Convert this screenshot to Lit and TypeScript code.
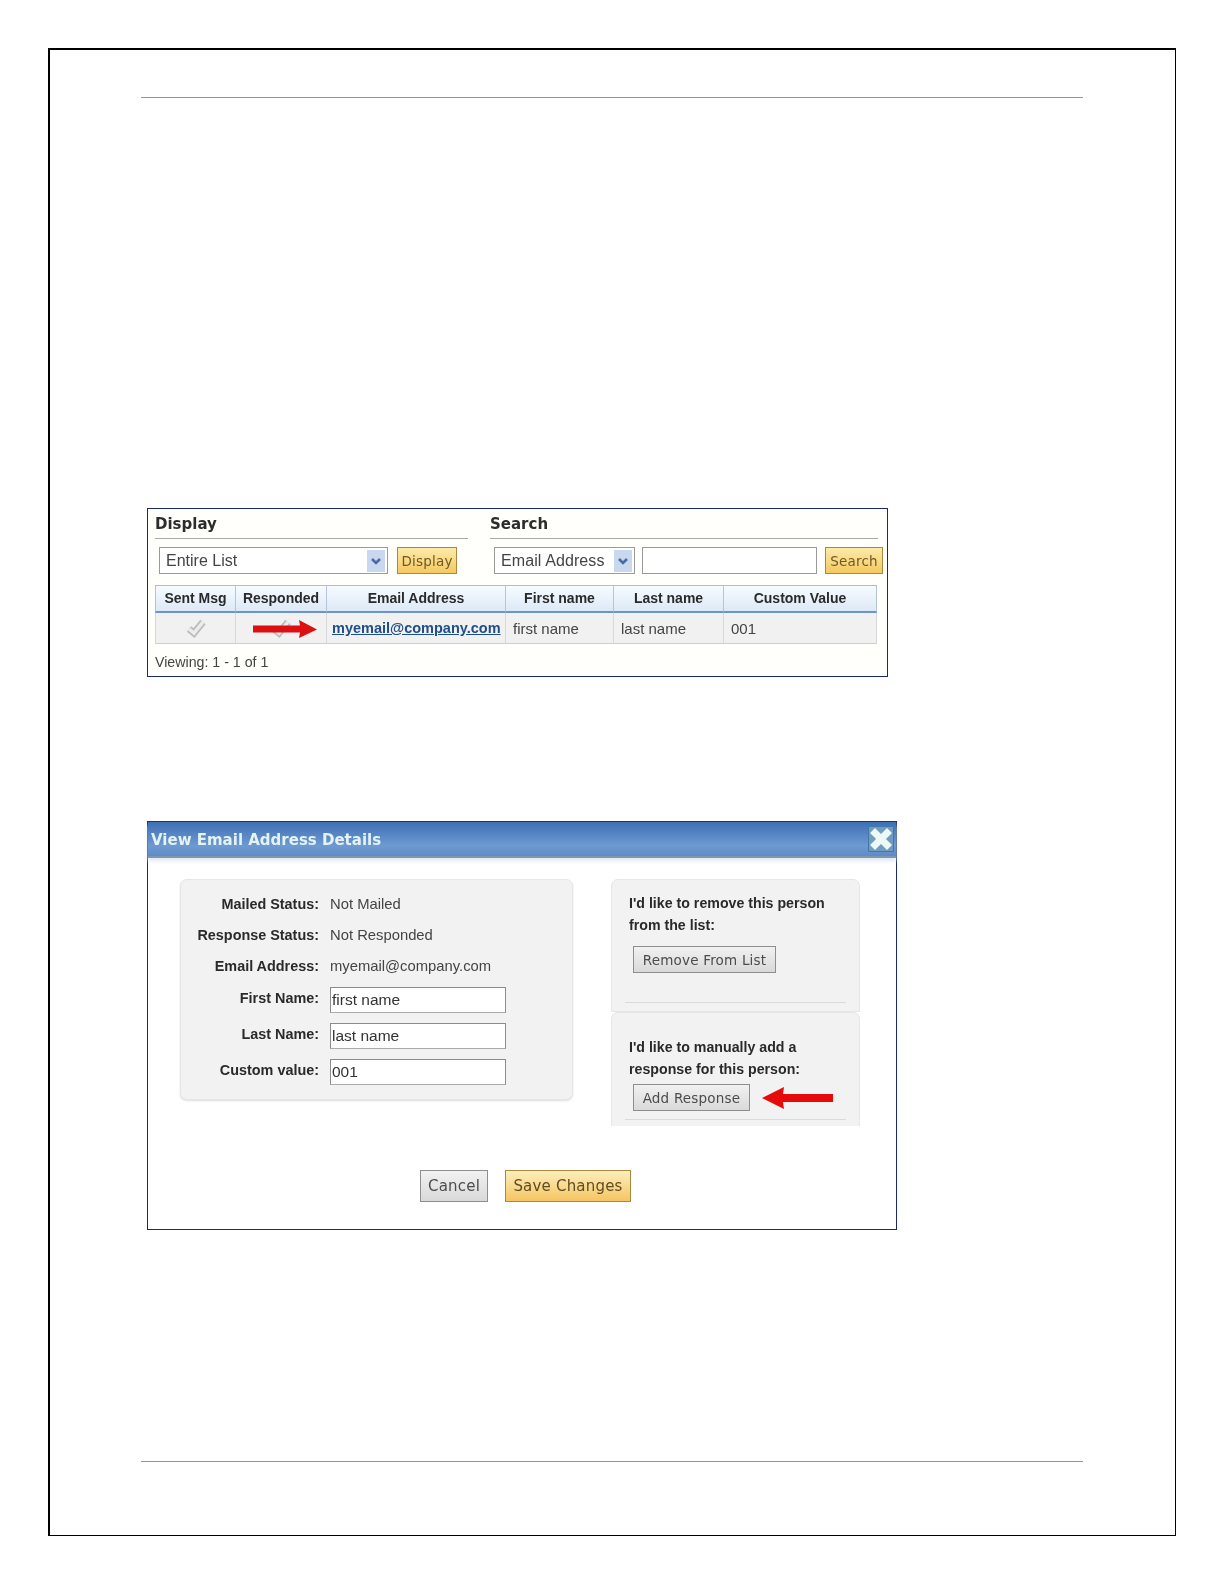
import { LitElement, html, css } from "lit";
import { customElement } from "lit/decorators.js";

const SANS = css`"Liberation Sans", Arial, sans-serif`;
const VERD = css`"DejaVu Sans", Verdana, sans-serif`;

const chevron = html`<svg class="chev" width="22" height="26" viewBox="0 0 22 26"><rect x="2" y="2" width="18" height="22" fill="#c9d8ee"/><path d="M7 11 L11 15 L15 11" fill="none" stroke="#4a6ca6" stroke-width="2.6"/></svg>`;

const arrowRight = html`<svg class="arrow r" width="64" height="18" viewBox="0 0 64 18"><path d="M64 9.5 L46 0 L47 5.5 H0 V12.5 H47 L46 18 Z" fill="#dc0f12"/></svg>`;
const arrowLeft = html`<svg class="arrow l" width="71" height="22" viewBox="0 0 71 22"><path d="M0 11 L22 0 L21 7 H71 V15 H21 L22 22 Z" fill="#e50b0b"/></svg>`;

const check = html`<svg width="22" height="20" viewBox="0 0 22 20"><path d="M4 11 L9 15 L18 4" fill="none" stroke="#bcbcbc" stroke-width="7"/><path d="M4 11 L9 15 L18 4" fill="none" stroke="#ececec" stroke-width="3.5"/></svg>`;

const close = html`<svg class="close" width="26" height="26" viewBox="0 0 26 26"><rect width="26" height="26" fill="#3f7aa6"/><rect x="1" y="1" width="24" height="24" fill="#6f9cc0"/><path d="M7 7 L19 19 M19 7 L7 19" stroke="#eef8f4" stroke-width="7" stroke-linecap="square"/></svg>`;

@customElement("app-root")
export class AppRoot extends LitElement {
  static styles = css`
    :host { display: block; height: 1585px; overflow: hidden; background: #fff; font-family: ${SANS}; color: #222; }
    .page { margin: 48px 0 0 48px; width: 1125px; height: 1485px; border: solid #000; border-width: 2px 1px 1px 2px; display: flex; flex-direction: column; }
    .rule { margin-left: 91px; width: 942px; height: 1px; background: #6f9bd4; flex: none; }
    .rule.top { margin-top: 47px; }
    .shot { filter: blur(0.45px); margin-left: 97px; border: 1.5px solid #1a2a6c; background: #fffffb; box-sizing: border-box; flex: none; }
    .list { width: 741px; height: 169px; margin-top: 410px; padding: 0 7px; display: flex; flex-direction: column; }
    .tools { display: grid; grid-template-columns: 313px 388px; column-gap: 22px; height: 76px; flex: none; width: 723px; }
    .sec h3 { margin: 0; padding-top: 2px; font: bold 15px/27px ${VERD}; color: #2c2c2c; border-bottom: 1px solid #a9a9a9; }
    .ctl { display: flex; align-items: flex-start; margin-top: 8px; }
    .ctl > * { flex: none; }
    .sel { box-sizing: border-box; height: 27px; border: 1px solid #9a9a9a; background: #fff; font-size: 16px; color: #444; display: flex; align-items: center; justify-content: space-between; padding: 0 0 0 6px; }
    .sel.a { width: 229px; margin-left: 4px; }
    .sel.b { width: 141px; margin-left: 4px; letter-spacing: 0.1px; }
    .chev { flex: none; }
    .txt { box-sizing: border-box; height: 27px; width: 175px; margin-left: 7px; border: 1px solid #9a9a9a; background: #fff; }
    .btn { box-sizing: border-box; font: 13.5px ${VERD}; letter-spacing: 0.2px; display: flex; align-items: center; justify-content: center; white-space: nowrap; }
    .gold { border: 1px solid #a98a3c; background: linear-gradient(#fdeaa8, #f5c95f); color: #6b5a2c; height: 27px; }
    .grey { border: 1px solid #8e8e8e; background: linear-gradient(#f1f1f1, #d9d9d9); color: #4c4c4c; height: 27px; }
    .gold.d { width: 60px; margin-left: 9px; }
    .gold.s { width: 58px; margin-left: 8px; }
    .tbl { display: grid; grid-template-columns: 81px 91px 179px 108px 110px 153px; width: 722px; flex: none; }
    .th { height: 28px; box-sizing: border-box; padding-bottom: 1px; background: linear-gradient(#f7fbff, #dce9f8); border-top: 1px solid #a9bcd8; border-right: 1px solid #b4c4da; border-bottom: 2px solid #6f93c4; display: flex; align-items: center; justify-content: center; font: bold 14px ${SANS}; color: #2a2a2a; white-space: nowrap; }
    .th:first-child { border-left: 1px solid #b4c4da; }
    .td { height: 31px; box-sizing: border-box; background: #f1f1f1; border-right: 1px solid #d8d8d8; border-bottom: 1px solid #cfcfcf; display: flex; align-items: center; padding-left: 7px; font-size: 15px; color: #444; position: relative; white-space: nowrap; }
    .td.c { justify-content: center; padding: 0; }
    .td.first { border-left: 1px solid #d8d8d8; }
    .td a { color: #1e4f8c; font-weight: bold; font-size: 14.5px; text-decoration: underline; margin-left: -2px; }
    .td .r { position: absolute; left: 17px; top: 7px; }
    .view { margin-top: 10px; font-size: 14.2px; color: #444; }
    .dlg { width: 750px; height: 409px; margin-top: 144px; display: flex; flex-direction: column; background: #fff; }
    .bar { height: 34px; flex: none; background: linear-gradient(#3f6fb4, #6d9ad2 70%, #5f8ac6); border-bottom: 2px solid #7d97ad; box-shadow: 0 3px 4px #dfe9f2; display: flex; align-items: center; justify-content: space-between; padding: 0 2px 0 3px; }
    .bar h2 { margin: 2px 0 0; font: bold 15px ${VERD}; color: #e4f3f2; }
    .cols { display: flex; align-items: flex-start; padding: 21px 0 0 32px; }
    .left { box-sizing: border-box; width: 393px; height: 221px; background: #f2f2f2; border: 1px solid #e6e6e6; border-radius: 7px; box-shadow: 0 1px 2px #ddd; padding: 13px 0 0; display: grid; grid-template-columns: 138px 176px; column-gap: 11px; grid-auto-rows: min-content; }
    .lab { font: bold 14.4px/22px ${SANS}; color: #2a2a2a; text-align: right; white-space: nowrap; height: 22px; }
    .val { font-size: 14.8px; color: #444; height: 22px; line-height: 22px; white-space: nowrap; margin-bottom: 9px; }
    .val.end { margin-bottom: 10px; }
    .inp { box-sizing: border-box; height: 26px; width: 176px; border: 1px solid #8c8c8c; border-bottom-color: #aaa; background: #fff; padding-left: 1px; font-size: 15.5px; color: #333; line-height: 24px; margin-bottom: 10px; }
    .right { margin-left: 38px; width: 249px; display: flex; flex-direction: column; }
    .box { box-sizing: border-box; background: #f2f2f2; border: 1px solid #e6e6e6; border-radius: 7px 7px 0 0; padding: 0 17px; position: relative; }
    .box.one { height: 133px; padding-top: 12px; }
    .box.two { height: 114px; padding-top: 23px; border-bottom: none; }
    .box p { margin: 0; font: bold 14.2px/22px ${SANS}; color: #2a2a2a; white-space: nowrap; }
    .box .grey { margin: 10px 0 0 4px; width: 143px; height: 27px; }
    .box.two .grey { width: 117px; margin-top: 4px; }
    .line { position: absolute; left: 13px; right: 13px; height: 1px; background: #dadada; }
    .box.one .line { top: 122px; }
    .box.two .line { top: 106px; }
    .box.two .l { position: absolute; left: 150px; top: 74px; }
    .foot { display: flex; padding: 44px 0 0 272px; gap: 17px; }
    .foot .btn { height: 32px; font-size: 15px; }
    .foot .grey { width: 68px; }
    .foot .gold { width: 126px; color: #5f4d22; background: linear-gradient(#fdeebb, #f5c563); }
    .rule.bot { margin-top: 231px; }
  `;

  render() {
    const heads = ["Sent Msg", "Responded", "Email Address", "First name", "Last name", "Custom Value"];
    return html`
      <div class="page">
        <div class="rule top"></div>
        <div class="shot list">
          <div class="tools">
            <div class="sec">
              <h3>Display</h3>
              <div class="ctl">
                <div class="sel a"><span>Entire List</span>${chevron}</div>
                <div class="btn gold d">Display</div>
              </div>
            </div>
            <div class="sec">
              <h3>Search</h3>
              <div class="ctl">
                <div class="sel b"><span>Email Address</span>${chevron}</div>
                <div class="txt"></div>
                <div class="btn gold s">Search</div>
              </div>
            </div>
          </div>
          <div class="tbl">
            ${heads.map((h) => html`<div class="th">${h}</div>`)}
            <div class="td c first">${check}</div>
            <div class="td c">${check}${arrowRight}</div>
            <div class="td"><a>myemail@company.com</a></div>
            <div class="td">first name</div>
            <div class="td">last name</div>
            <div class="td">001</div>
          </div>
          <div class="view">Viewing: 1 - 1 of 1</div>
        </div>
        <div class="shot dlg">
          <div class="bar"><h2>View Email Address Details</h2>${close}</div>
          <div class="cols">
            <div class="left">
              <div class="lab">Mailed Status:</div><div class="val">Not Mailed</div>
              <div class="lab">Response Status:</div><div class="val">Not Responded</div>
              <div class="lab">Email Address:</div><div class="val end">myemail@company.com</div>
              <div class="lab">First Name:</div><div class="inp">first name</div>
              <div class="lab">Last Name:</div><div class="inp">last name</div>
              <div class="lab">Custom value:</div><div class="inp">001</div>
            </div>
            <div class="right">
              <div class="box one">
                <p>I'd like to remove this person<br />from the list:</p>
                <div class="btn grey">Remove From List</div>
                <div class="line"></div>
              </div>
              <div class="box two">
                <p>I'd like to manually add a<br />response for this person:</p>
                <div class="btn grey">Add Response</div>
                ${arrowLeft}
                <div class="line"></div>
              </div>
            </div>
          </div>
          <div class="foot">
            <div class="btn grey">Cancel</div>
            <div class="btn gold">Save Changes</div>
          </div>
        </div>
        <div class="rule bot"></div>
      </div>
    `;
  }
}
